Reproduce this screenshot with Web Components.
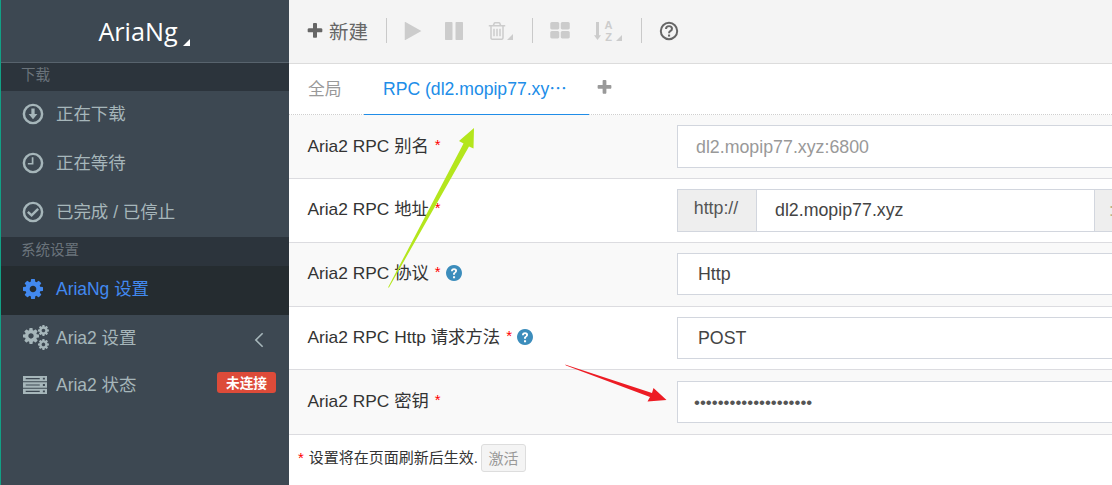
<!DOCTYPE html>
<html lang="zh">
<head>
<meta charset="utf-8">
<title>AriaNg</title>
<style>
html,body{margin:0;padding:0;background:#fff;overflow:hidden}
body{width:1112px;height:485px;font-family:"Liberation Sans","Noto Sans CJK SC",sans-serif;font-size:17.5px;color:#333}
</style>
</head>
<body>
<template id="t-app"><style>
:host{display:flex;position:relative;width:1112px;height:485px;overflow:hidden}
.main{flex:1;min-width:0;display:flex;flex-direction:column}
</style><slot name="side"></slot><div class="main"><slot></slot></div><slot name="over"></slot></template>

<template id="t-side"><style>
:host{display:block;box-sizing:border-box;flex:none;width:289px;height:485px;background:#3d4852;border-left:1px solid #12a085;color:#a6b6ba}
.logo{height:62.5px;box-sizing:border-box;border-bottom:1px solid #58636d;display:flex;align-items:center;justify-content:center;color:#fff;font-family:"Open Sans",sans-serif;font-size:25.2px;padding:0 2px 0 0;position:relative}
.logo i{display:inline-block;width:0;height:0;border-style:solid;border-width:0 0 7px 7px;border-color:transparent transparent #fff transparent;margin:24px 0 0 5px}
</style><div class="logo">AriaNg<i></i></div><slot></slot></template>

<template id="t-head"><style>
:host{display:flex;align-items:center;height:28.5px;box-sizing:border-box;padding:0 0 7px 20px;background:#2c343c;color:#6a737b;font-size:14.5px}
</style><slot></slot></template>

<template id="t-nav"><style>
:host{display:flex;align-items:center;height:48.75px;box-sizing:border-box;padding:0 13px 2px 22px;font-size:17.45px;color:#a6b6ba}
:host([active]){background:#252c30;color:#4289f0}
.ic{width:33px;flex:none;display:flex;align-items:center}
.t{flex:1;white-space:nowrap;padding-bottom:3px}
</style><span class="ic"><slot name="icon"></slot></span><span class="t"><slot></slot></span><slot name="end"></slot></template>

<template id="t-icon"><style>
:host{display:inline-flex;line-height:0;flex:none}
svg{display:block;overflow:visible}
</style><span id="h"></span></template>

<template id="t-bar"><style>
:host{display:flex;align-items:center;height:64px;box-sizing:border-box;background:#f4f4f4;border-bottom:1px solid #dcdcdc;padding:0 0 2px 18px;color:#666;flex:none}
.new{display:flex;align-items:center;gap:6px;font-size:19.5px;color:#666}
.sep{width:1px;height:25px;background:#c9c9c9;flex:none}
.tool{display:flex;align-items:flex-end;flex:none}
.car{width:0;height:0;border-style:solid;border-width:0 0 6px 6px;border-color:transparent transparent #ccc transparent;margin:0 0 0 1px}
</style>
<div class="new"><ari-icon name="plus" size="16" color="#666"></ari-icon><span>新建</span></div>
<span class="sep" style="margin-left:18px"></span>
<ari-icon name="play" size="18" color="#ccc" style="margin-left:17px"></ari-icon>
<ari-icon name="pause" size="18" color="#ccc" style="margin-left:23px"></ari-icon>
<div class="tool" style="margin-left:25px"><ari-icon name="trash" size="18" color="#ccc"></ari-icon><span class="car"></span></div>
<span class="sep" style="margin-left:19px"></span>
<ari-icon name="th" size="18" color="#ccc" style="margin-left:18px"></ari-icon>
<div class="tool" style="margin-left:25px"><ari-icon name="sort" size="20" color="#ccc"></ari-icon><span class="car" style="margin-left:2px"></span></div>
<span class="sep" style="margin-left:19px"></span>
<ari-icon name="help" size="18" color="#666" style="margin-left:18px"></ari-icon>
</template>

<template id="t-tabs"><style>
:host{display:flex;height:51.25px;box-sizing:border-box;background:#fff;border-bottom:1px dotted #cfcfcf;flex:none}
a{display:flex;align-items:center;padding:0 19px;height:52px;box-sizing:border-box;color:#999;padding-bottom:5px;white-space:nowrap;font-size:16.8px}
a.on{color:#208de8;border-bottom:2px solid #208de8;width:225px;padding:0 0 4px 19px;margin-left:3.4px;font-size:17.6px}
.add{display:flex;align-items:center;padding:0 0 3px 8px}
</style>
<a>全局</a><a class="on">RPC (dl2.mopip77.xy⋯</a>
<div class="add"><ari-icon name="plus" size="15" color="#999"></ari-icon></div>
</template>

<template id="t-row"><style>
:host{display:grid;grid-template-columns:388px 1fr;align-items:center;box-sizing:border-box;height:63.75px;border-bottom:1px solid #dcdce0;background:#fff;color:#333;font-size:17.35px;overflow:hidden;flex:none}
:host([alt]){background:#f9f9f9}
:host([last]){height:64.5px}
.l{padding:0 0 5px 18.4px;display:flex;align-items:center;white-space:nowrap}
.s{color:#f00;margin-left:6px;font-size:15px}
.h{margin-left:5px;display:flex;padding-top:3px}
.c{min-width:0;margin-right:-12px}
</style><div class="l"><span id="lb"></span><span class="s">*</span><span class="h" id="hp"></span></div><div class="c"><slot></slot></div></template>

<template id="t-field"><style>
:host{display:flex;height:42.5px;box-sizing:border-box;border:1px solid #d2d6de;background:#fff;color:#444;align-items:center;padding:1px 0 0 20px;font-size:17.8px;white-space:nowrap}
:host([ph]){color:#999;padding-left:18px}
:host([pw]){padding-left:16px;color:#555;font-size:16.9px}
</style><slot></slot></template>

<template id="t-group"><style>
:host{display:flex;height:42.5px;font-size:17.8px;color:#444;white-space:nowrap}
div{box-sizing:border-box;border:1px solid #d2d6de;display:flex;align-items:center;padding-top:1px}
.a{width:79px;background:#eee;justify-content:center;flex:none;border-right:0;color:#555;padding:0 2px 3px 0}
.b{flex:1;padding-left:18px;background:#fff}
.p{width:29px;background:#eee;flex:none;border-left:0;padding-left:14px;color:#b9b18a}
</style><div class="a">http://</div><div class="b">dl2.mopip77.xyz</div><div class="p">:</div></template>

<template id="t-foot"><style>
:host{display:flex;align-items:center;padding:9px 0 0 9px;font-size:15px;color:#333;white-space:nowrap}
.s{color:#f00;margin-right:5px}
button{font:inherit;color:#999;background:#f4f4f4;border:1px solid #ddd;border-radius:3px;height:28px;width:45px;margin-left:3px;padding:0}
</style><span class="s">*</span><span style="padding-bottom:2px">设置将在页面刷新后生效.</span><button>激活</button></template>

<template id="t-arrows"><style>
:host{position:absolute;inset:0;display:block;pointer-events:none}
svg{position:absolute;left:0;top:0}
</style><svg width="1112" height="485" viewBox="0 0 1112 485">
<polygon fill="#b4e61d" points="388,287.500 463.500,143.500 459,141 474,128 473.500,148.500 469,146.500 389,287.500"/>
<polygon fill="#ed1c24" points="565,364.500 652,393 653.500,388 666.500,400 647.500,401.500 650,397 566,365.500"/>
</svg></template>

<ari-app>
  <ari-side slot="side">
    <ari-head>下载</ari-head>
    <ari-nav><ari-icon slot="icon" name="down" size="20" color="#a6b6ba"></ari-icon>正在下载</ari-nav>
    <ari-nav><ari-icon slot="icon" name="clock" size="20" color="#a6b6ba"></ari-icon>正在等待</ari-nav>
    <ari-nav><ari-icon slot="icon" name="check" size="20" color="#a6b6ba"></ari-icon>已完成 / 已停止</ari-nav>
    <ari-head>系统设置</ari-head>
    <ari-nav active><ari-icon slot="icon" name="cog" size="20" color="#4289f0"></ari-icon>AriaNg 设置</ari-nav>
    <ari-nav><ari-icon slot="icon" name="cogs" size="26" color="#a6b6ba"></ari-icon>Aria2 设置<ari-icon slot="end" name="left" size="16" color="#a6b6ba" style="margin:4px 8px 0 0"></ari-icon></ari-nav>
    <ari-nav style="padding-bottom:5px"><ari-icon slot="icon" name="server" size="24" color="#a6b6ba"></ari-icon>Aria2 状态<ari-badge slot="end" style="margin-bottom:6px">未连接</ari-badge></ari-nav>
  </ari-side>
  <ari-bar></ari-bar>
  <ari-tabs></ari-tabs>
  <ari-row alt label="Aria2 RPC 别名"><ari-field ph>dl2.mopip77.xyz:6800</ari-field></ari-row>
  <ari-row label="Aria2 RPC 地址"><ari-group></ari-group></ari-row>
  <ari-row alt label="Aria2 RPC 协议" help><ari-field>Http</ari-field></ari-row>
  <ari-row label="Aria2 RPC Http 请求方法" help><ari-field>POST</ari-field></ari-row>
  <ari-row alt last label="Aria2 RPC 密钥"><ari-field pw>••••••••••••••••••••</ari-field></ari-row>
  <ari-foot></ari-foot>
  <ari-arrows slot="over"></ari-arrows>
</ari-app>

<script>
const COG="M1152 896q0-106-75-181t-181-75-181 75-75 181 75 181 181 75 181-75 75-181zm512-109v222q0 12-8 23t-20 13l-185 28q-19 54-39 91 35 50 107 138 10 12 10 25t-9 23q-27 37-99 108t-94 71q-12 0-26-9l-138-108q-44 23-91 38-16 136-29 186-7 28-36 28h-222q-14 0-24.500-8.500t-11.500-21.500l-28-184q-49-16-90-37l-141 107q-10 9-25 9-14 0-25-11-126-114-165-168-7-10-7-23 0-12 8-23 15-21 51-66.500t54-70.500q-27-50-41-99l-183-27q-13-2-21-12.500t-8-23.500v-222q0-12 8-23t19-13l186-28q14-46 39-92-40-57-107-138-10-12-10-24 0-10 9-23 26-36 98.500-107.500t94.500-71.500q13 0 26 10l138 107q44-23 91-38 16-136 29-186 7-28 36-28h222q14 0 24.500 8.500t11.500 21.500l28 184q49 16 90 37l142-107q9-9 24-9 13 0 25 10 129 119 165 170 7 8 7 22 0 12-8 23-15 21-51 66.500t-54 70.500q26 50 41 98l183 28q13 2 21 12.500t8 23.500z";
const P={
 plus:'<path d="M1600 736v192q0 40-28 68t-68 28h-416v416q0 40-28 68t-68 28h-192q-40 0-68-28t-28-68v-416h-416q-40 0-68-28t-28-68v-192q0-40 28-68t68-28h416v-416q0-40 28-68t68-28h192q40 0 68 28t28 68v416h416q40 0 68 28t28 68z"/>',
 play:'<path d="M1576 927l-1328 738q-23 13-39.500 3t-16.500-36v-1472q0-26 16.500-36t39.500 3l1328 738q23 13 23 31t-23 31z"/>',
 pause:'<path d="M1664 192v1408q0 26-19 45t-45 19h-512q-26 0-45-19t-19-45v-1408q0-26 19-45t45-19h512q26 0 45 19t19 45zm-896 0v1408q0 26-19 45t-45 19h-512q-26 0-45-19t-19-45v-1408q0-26 19-45t45-19h512q26 0 45 19t19 45z"/>',
 trash:'<path d="M704 736v576q0 14-9 23t-23 9h-64q-14 0-23-9t-9-23v-576q0-14 9-23t23-9h64q14 0 23 9t9 23zm256 0v576q0 14-9 23t-23 9h-64q-14 0-23-9t-9-23v-576q0-14 9-23t23-9h64q14 0 23 9t9 23zm256 0v576q0 14-9 23t-23 9h-64q-14 0-23-9t-9-23v-576q0-14 9-23t23-9h64q14 0 23 9t9 23zm128 724v-948h-896v948q0 22 7 40.500t14.500 27 10.500 8.500h832q3 0 10.500-8.500t14.500-27 7-40.500zm-672-1076h448l-48-117q-7-9-17-11h-317q-10 2-17 11zm928 32v64q0 14-9 23t-23 9h-96v948q0 83-47 143.500t-113 60.500h-832q-66 0-113-58.500t-47-141.500v-952h-96q-14 0-23-9t-9-23v-64q0-14 9-23t23-9h309l70-167q15-37 54-63t79-26h320q40 0 79 26t54 63l70 167h309q14 0 23 9t9 23z"/>',
 th:'<path d="M832 1024v384q0 52-38 90t-90 38h-512q-52 0-90-38t-38-90v-384q0-52 38-90t90-38h512q52 0 90 38t38 90zm0-768v384q0 52-38 90t-90 38h-512q-52 0-90-38t-38-90v-384q0-52 38-90t90-38h512q52 0 90 38t38 90zm896 768v384q0 52-38 90t-90 38h-512q-52 0-90-38t-38-90v-384q0-52 38-90t90-38h512q52 0 90 38t38 90zm0-768v384q0 52-38 90t-90 38h-512q-52 0-90-38t-38-90v-384q0-52 38-90t90-38h512q52 0 90 38t38 90z"/>',
 cog:'<path d="'+COG+'"/>',
 cogs:'<g transform="translate(49 226) scale(.615)"><path d="'+COG+'"/></g><g transform="translate(959 74) scale(.42)"><path d="'+COG+'"/></g><g transform="translate(959 900) scale(.42)"><path d="'+COG+'"/></g>',
 server:'<path fill-rule="evenodd" d="M128 320h1536v340H128zM128 726h1536v340H128zM128 1132h1536v340H128zM300 455v70h900v-70zM300 861v70h900v-70zM300 1267v70h900v-70zM1400 430v120h130v-120zM1400 836v120h130v-120zM1400 1242v120h130v-120z"/>',
 down:'<circle cx="896" cy="896" r="700" fill="none" stroke="currentColor" stroke-width="190"/><path d="M770 480h252v420h210L896 1290 560 900h210z"/>',
 clock:'<circle cx="896" cy="896" r="700" fill="none" stroke="currentColor" stroke-width="190"/><path d="M800 460h130v560H500V900h300z"/>',
 check:'<circle cx="896" cy="896" r="700" fill="none" stroke="currentColor" stroke-width="190"/><path d="M500 880l290 270 500-500" fill="none" stroke="currentColor" stroke-width="190"/>',
 help:'<circle cx="896" cy="896" r="700" fill="none" stroke="currentColor" stroke-width="170"/><path d="M640 720q10-240 260-240 250 0 250 220 0 130-150 210-90 50-90 130v50" fill="none" stroke="currentColor" stroke-width="170"/><rect x="810" y="1200" width="180" height="170"/>',
 qblue:'<path fill-rule="evenodd" d="M896 128a768 768 0 1 0 .1 0zM800 1200h200v190H800zM600 720q10-280 300-280 290 0 290 250 0 140-130 215-70 40-70 95v70H800v-90q0-100 110-165 90-50 90-115 0-90-100-90-105 0-115 110z"/>',
 left:'<path d="M1150 250L500 896l650 646" fill="none" stroke="currentColor" stroke-width="160"/>',
 sort:'<path d="M283 205h230v1010h154L398 1590 128 1215h155z"/><text x="1244" y="744" font-family="Liberation Sans,sans-serif" font-weight="700" font-size="850" text-anchor="middle">A</text><text x="1244" y="1668" font-family="Liberation Sans,sans-serif" font-weight="700" font-size="850" text-anchor="middle">Z</text>'
};
function tpl(id,sr){sr.appendChild(document.getElementById(id).content.cloneNode(true));}
class Base extends HTMLElement{
  constructor(){super();this.attachShadow({mode:'open'});tpl(this.constructor.tid,this.shadowRoot);}
}
const simple={'ari-app':'t-app','ari-side':'t-side','ari-head':'t-head','ari-nav':'t-nav','ari-bar':'t-bar','ari-tabs':'t-tabs','ari-field':'t-field','ari-group':'t-group','ari-foot':'t-foot','ari-arrows':'t-arrows'};
class AriIcon extends HTMLElement{
  constructor(){super();this.attachShadow({mode:'open'});tpl('t-icon',this.shadowRoot);}
  connectedCallback(){
    const s=this.getAttribute('size')||18,c=this.getAttribute('color')||'currentColor';
    this.shadowRoot.getElementById('h').innerHTML='<svg xmlns="http://www.w3.org/2000/svg" width="'+s+'" height="'+s+'" viewBox="128 128 1536 1536" fill="'+c+'" style="color:'+c+'">'+P[this.getAttribute('name')]+'</svg>';
  }
}
customElements.define('ari-icon',AriIcon);
class AriBadge extends HTMLElement{
  constructor(){super();const r=this.attachShadow({mode:'open'});
    r.innerHTML='<style>:host{display:flex;align-items:center;justify-content:center;box-sizing:border-box;width:59px;height:21px;background:#dd4b39;border-radius:3px;color:#fff;font-weight:700;font-size:13.7px;flex:none;margin-bottom:9px}</style><slot></slot>';}
}
customElements.define('ari-badge',AriBadge);
class AriRow extends HTMLElement{
  constructor(){super();this.attachShadow({mode:'open'});tpl('t-row',this.shadowRoot);}
  connectedCallback(){
    this.shadowRoot.getElementById('lb').textContent=this.getAttribute('label');
    if(this.hasAttribute('help')){
      const i=document.createElement('ari-icon');i.setAttribute('name','qblue');i.setAttribute('size','16');i.setAttribute('color','#3c8dbc');
      this.shadowRoot.getElementById('hp').appendChild(i);
    }
  }
}
customElements.define('ari-row',AriRow);
for(const [n,t] of Object.entries(simple)){
  customElements.define(n,class extends Base{static tid=t;});
}
</script>
</body>
</html>
